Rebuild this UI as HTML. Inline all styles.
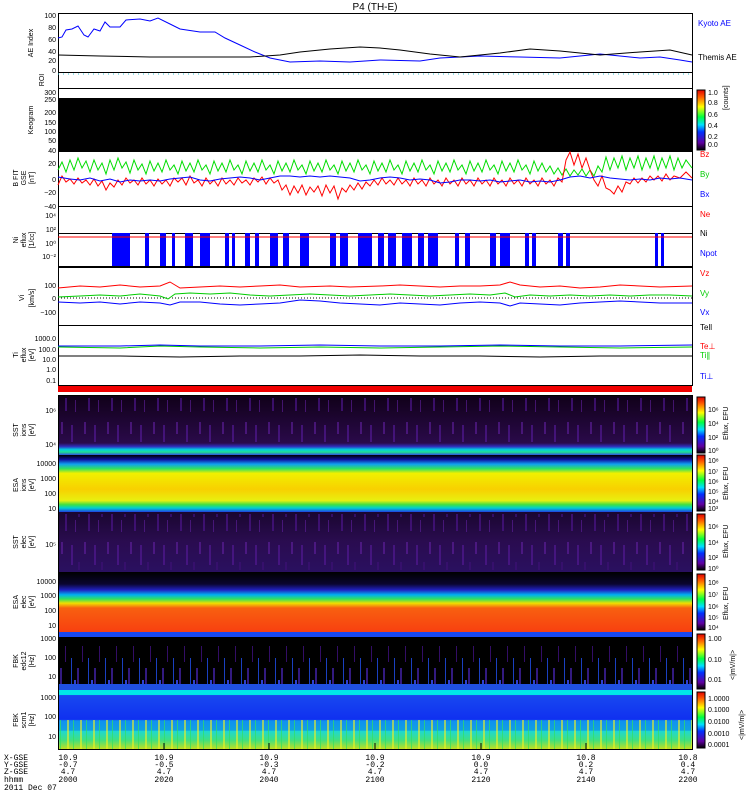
<!DOCTYPE html>
<html><head><meta charset="utf-8"><style>
html,body{margin:0;padding:0;background:#fff;width:750px;height:800px;overflow:hidden}
svg{display:block;font-family:"Liberation Sans",sans-serif}
</style></head><body>
<svg width="750" height="800" xmlns="http://www.w3.org/2000/svg">
<defs>
<linearGradient id="sst1" x1="0" y1="0" x2="0" y2="1">
<stop offset="0" stop-color="#100018"/><stop offset="0.8" stop-color="#2a0a4a"/><stop offset="0.86" stop-color="#3030c0"/><stop offset="0.91" stop-color="#00d0e0"/><stop offset="0.95" stop-color="#20e090"/><stop offset="1" stop-color="#3050e0"/></linearGradient>
<linearGradient id="esa1" x1="0" y1="0" x2="0" y2="1">
<stop offset="0" stop-color="#000"/><stop offset="0.08" stop-color="#1010a0"/><stop offset="0.16" stop-color="#10a0f0"/><stop offset="0.24" stop-color="#30e060"/><stop offset="0.32" stop-color="#f0f000"/><stop offset="0.6" stop-color="#f8d000"/><stop offset="0.8" stop-color="#e8f010"/><stop offset="0.87" stop-color="#40e040"/><stop offset="0.93" stop-color="#00d0d0"/><stop offset="1" stop-color="#2040e0"/></linearGradient>
<linearGradient id="sst2" x1="0" y1="0" x2="0" y2="1">
<stop offset="0" stop-color="#1a0630"/><stop offset="0.5" stop-color="#2a0c50"/><stop offset="1" stop-color="#2a1060"/></linearGradient>
<linearGradient id="esa2" x1="0" y1="0" x2="0" y2="1">
<stop offset="0" stop-color="#000"/><stop offset="0.2" stop-color="#0a0530"/><stop offset="0.3" stop-color="#2020c0"/><stop offset="0.38" stop-color="#00b0f0"/><stop offset="0.45" stop-color="#30e060"/><stop offset="0.52" stop-color="#f0e000"/><stop offset="0.6" stop-color="#f86010"/><stop offset="1" stop-color="#f84010"/></linearGradient>
<linearGradient id="fbk2" x1="0" y1="0" x2="0" y2="1">
<stop offset="0" stop-color="#00e8e8"/><stop offset="0.08" stop-color="#00e8e8"/><stop offset="0.09" stop-color="#1848f0"/><stop offset="0.5" stop-color="#1030f0"/><stop offset="0.52" stop-color="#1090f0"/><stop offset="0.68" stop-color="#10a0e0"/><stop offset="0.7" stop-color="#20d8d0"/><stop offset="0.85" stop-color="#40e080"/><stop offset="1" stop-color="#c0e020"/></linearGradient>
<linearGradient id="cb" x1="0" y1="1" x2="0" y2="0">
<stop offset="0" stop-color="#000"/><stop offset="0.12" stop-color="#6000a0"/><stop offset="0.3" stop-color="#0030ff"/><stop offset="0.42" stop-color="#00e0ff"/><stop offset="0.55" stop-color="#00ff40"/><stop offset="0.72" stop-color="#ffff00"/><stop offset="0.88" stop-color="#ff6000"/><stop offset="1" stop-color="#e00000"/></linearGradient>
<pattern id="pstripe" width="23" height="60" patternUnits="userSpaceOnUse">
<rect x="2" y="5" width="2" height="20" fill="#501890" opacity=".7"/><rect x="9" y="22" width="2" height="15" fill="#3a1070" opacity=".8"/><rect x="15" y="2" width="2" height="12" fill="#6020a0" opacity=".6"/><rect x="19" y="33" width="2" height="18" fill="#4a1488" opacity=".7"/><rect x="6" y="40" width="1" height="12" fill="#6020a0" opacity=".6"/>
</pattern>
<pattern id="fstripe" width="17" height="58" patternUnits="userSpaceOnUse">
<rect x="3" y="20" width="1" height="30" fill="#2050f0" opacity=".8"/><rect x="9" y="30" width="2" height="20" fill="#4020a0" opacity=".8"/><rect x="14" y="8" width="1" height="16" fill="#401080" opacity=".8"/><rect x="6" y="42" width="2" height="10" fill="#3040d0"/>
</pattern>
<pattern id="gstripe" width="13" height="30" patternUnits="userSpaceOnUse">
<rect x="2" y="0" width="2" height="30" fill="#f0f020" opacity=".6"/><rect x="8" y="0" width="1" height="30" fill="#30e060" opacity=".7"/>
</pattern>
</defs>
<text x="375" y="10" font-size="10" text-anchor="middle">P4 (TH-E)</text>
<rect x="58" y="98" width="634" height="53" fill="#000"/>
<rect x="58" y="386" width="634" height="6" fill="#f00000"/>
<rect x="58" y="395" width="634" height="60" fill="url(#sst1)"/>
<rect x="58" y="398" width="634" height="44" fill="url(#pstripe)"/>
<rect x="58" y="455" width="634" height="57" fill="url(#esa1)"/>
<rect x="58" y="512" width="634" height="60" fill="url(#sst2)"/>
<rect x="58" y="514" width="634" height="56" fill="url(#pstripe)"/>
<rect x="58" y="572" width="634" height="60" fill="url(#esa2)"/>
<rect x="58" y="632" width="634" height="58" fill="#000"/>
<rect x="58" y="634" width="634" height="52" fill="url(#fstripe)"/>
<rect x="58" y="632" width="634" height="5" fill="#1848f0"/>
<rect x="58" y="684" width="634" height="6" fill="#2050e0"/>
<rect x="58" y="690" width="634" height="59" fill="url(#fbk2)"/>
<rect x="58" y="720" width="634" height="29" fill="url(#gstripe)"/>
<g fill="none" stroke="#000" stroke-width="1">
<rect x="58.5" y="13.5" width="634" height="59"/>
<rect x="58.5" y="72.5" width="634" height="16"/>
<rect x="58.5" y="88.5" width="634" height="63"/>
<rect x="58.5" y="151.5" width="634" height="55"/>
<rect x="58.5" y="206.5" width="634" height="61"/>
<rect x="58.5" y="233.5" width="634" height="33"/>
<rect x="58.5" y="267.5" width="634" height="58"/>
<rect x="58.5" y="325.5" width="634" height="60"/>
<rect x="58.5" y="395.5" width="634" height="354"/>
</g>
<line x1="58" y1="74" x2="692" y2="74" stroke="#30c0d0" stroke-dasharray="1,4"/>
<line x1="58" y1="298" x2="692" y2="298" stroke="#000" stroke-dasharray="1,2"/>
<g fill="#00f">
<rect x="112" y="233" width="18" height="33"/><rect x="145" y="233" width="4" height="33"/><rect x="160" y="233" width="6" height="33"/><rect x="172" y="233" width="3" height="33"/><rect x="185" y="233" width="8" height="33"/><rect x="200" y="233" width="10" height="33"/><rect x="225" y="233" width="4" height="33"/><rect x="232" y="233" width="3" height="33"/><rect x="245" y="233" width="5" height="33"/><rect x="255" y="233" width="4" height="33"/><rect x="270" y="233" width="8" height="33"/><rect x="283" y="233" width="6" height="33"/><rect x="300" y="233" width="9" height="33"/><rect x="330" y="233" width="6" height="33"/><rect x="340" y="233" width="8" height="33"/><rect x="358" y="233" width="14" height="33"/><rect x="378" y="233" width="6" height="33"/><rect x="388" y="233" width="8" height="33"/><rect x="402" y="233" width="10" height="33"/><rect x="418" y="233" width="6" height="33"/><rect x="428" y="233" width="10" height="33"/><rect x="455" y="233" width="4" height="33"/><rect x="465" y="233" width="5" height="33"/><rect x="490" y="233" width="6" height="33"/><rect x="500" y="233" width="10" height="33"/><rect x="525" y="233" width="4" height="33"/><rect x="532" y="233" width="4" height="33"/><rect x="558" y="233" width="5" height="33"/><rect x="566" y="233" width="4" height="33"/><rect x="655" y="233" width="3" height="33"/><rect x="661" y="233" width="3" height="33"/>
</g>
<line x1="58" y1="237" x2="692" y2="237" stroke="#f00"/>
<g fill="none" stroke-width="1">
<polyline stroke="#00f" points="58,38 62,37 66,30 72,29 78,26 84,35 88,37 94,29 100,31 105,22 110,27 120,27 126,20 140,19 150,21 158,18 170,24 180,29 200,32 215,32 225,38 240,45 255,52 270,58 290,62 320,61 350,62 380,60 420,61 440,58 480,56 520,57 560,58 580,56 600,54 620,56 640,58 660,57 680,60 692,62"/>
<polyline stroke="#000" points="58,55 100,56 150,57 200,57 250,57 280,55 300,52 330,49 360,47 380,48 400,50 430,54 460,57 500,53 530,49 560,51 600,55 640,52 670,50 692,55"/>
<polyline stroke="#0d0" points="58,170 62,162 66,172 70,160 74,170 78,158 82,168 86,161 90,172 94,160 98,170 102,163 106,174 110,160 114,170 118,158 122,168 126,162 130,173 134,160 138,170 142,164 146,174 150,161 154,171 158,163 162,172 166,160 170,170 174,165 178,174 182,161 186,171 190,163 194,172 198,160 202,170 206,165 210,174 214,161 218,171 222,163 226,172 230,160 234,170 238,165 242,174 246,161 250,171 254,163 258,172 262,160 266,170 270,165 274,174 278,161 282,171 286,163 290,172 294,160 298,170 302,165 306,174 310,161 314,171 318,163 322,172 326,160 330,170 334,165 338,174 342,161 346,171 350,163 354,172 358,160 362,170 366,165 370,174 374,161 378,171 382,163 386,172 390,160 394,170 398,165 402,174 406,161 410,171 414,163 418,172 422,160 426,170 430,165 434,174 438,161 442,171 446,163 450,172 454,160 458,170 462,165 466,174 470,161 474,171 478,163 482,172 486,160 490,170 494,165 498,174 502,161 506,171 510,163 514,172 518,160 522,170 526,165 530,174 534,161 538,171 542,163 546,172 550,166 554,174 558,168 562,175 566,169 570,176 574,170 578,175 582,169 586,176 590,170 594,176 598,166 602,172 606,157 610,170 614,158 618,168 622,156 626,170 630,158 634,168 638,156 642,170 646,158 650,168 654,156 658,170 662,158 666,168 670,156 674,170 678,158 682,168 686,160 692,168"/>
<polyline stroke="#f00" points="58,185 62,176 66,182 70,179 74,184 78,178 82,183 86,180 90,185 94,179 98,186 102,181 106,190 110,183 114,187 118,180 122,185 126,178 130,183 134,180 138,185 142,178 146,184 150,180 154,186 158,179 162,184 166,180 170,186 174,178 178,182 182,178 186,185 190,176 194,183 198,180 202,186 206,178 210,184 214,180 218,186 222,178 226,184 230,180 234,185 238,178 242,183 246,180 250,185 254,178 258,182 262,177 266,184 270,178 274,183 278,180 282,190 286,185 290,195 294,186 298,193 302,185 306,195 310,187 314,192 318,186 322,196 326,185 330,193 334,186 338,199 342,188 346,192 350,185 354,190 358,183 362,189 366,182 370,186 374,180 378,185 382,178 386,184 390,180 394,185 398,178 402,184 406,180 410,186 414,178 418,184 422,180 426,186 430,178 434,184 438,180 442,186 446,178 450,184 454,180 458,186 462,178 466,184 470,180 474,186 478,178 482,184 486,180 490,186 494,178 498,184 502,180 506,186 510,178 514,184 518,180 522,186 526,178 530,184 534,180 538,186 542,178 546,184 550,180 554,186 558,178 562,182 566,160 570,152 574,165 578,154 582,168 586,158 590,170 594,180 598,186 602,176 606,188 610,190 614,194 618,186 622,192 626,182 630,184 634,178 638,183 642,178 646,182 650,176 654,180 658,176 662,181 666,174 670,180 674,176 680,178 686,172 692,178"/>
<polyline stroke="#00f" points="58,177 70,179 80,180 90,178 100,181 110,179 120,182 130,180 140,181 150,180 160,181 170,179 180,178 190,177 200,180 210,181 220,179 230,178 240,177 250,178 260,180 270,178 280,176 290,176 300,177 310,176 320,177 330,176 340,177 350,178 360,181 370,180 380,178 390,177 400,178 410,180 420,179 430,180 440,183 450,182 460,180 470,180 480,181 490,180 500,182 510,181 520,180 530,182 540,181 550,182 560,180 570,177 580,176 590,178 600,176 610,178 620,179 630,180 640,179 650,180 660,178 670,179 680,178 692,180"/>
<polyline stroke="#f00" points="58,288 80,286 100,287 120,285 140,287 160,286 170,282 175,285 180,288 200,287 220,286 240,287 260,286 280,285 300,287 330,286 350,287 380,286 400,285 420,286 440,287 460,286 480,286 500,285 510,282 520,285 540,287 560,286 580,288 600,287 620,285 640,286 660,287 692,286"/>
<polyline stroke="#0c0" points="58,297 80,296 100,295 120,296 140,294 160,296 168,299 175,294 190,293 210,294 230,293 250,295 270,296 290,295 310,294 330,295 350,296 370,295 390,294 410,295 430,296 450,295 470,294 490,295 505,293 515,297 530,295 550,296 570,295 590,296 610,295 630,296 650,295 670,295 692,296"/>
<polyline stroke="#00f" points="58,302 80,303 100,302 120,304 140,302 160,303 170,305 180,302 200,302 220,304 240,305 260,304 280,303 300,300 320,301 340,303 360,304 380,305 400,303 420,304 440,305 460,303 480,302 500,303 510,306 520,303 540,304 560,305 580,303 600,302 620,301 640,302 660,303 692,303"/>
<polyline stroke="#0c0" points="58,347 120,348 160,346 200,347 260,348 320,347 380,348 440,347 500,346 560,347 620,348 692,347"/>
<polyline stroke="#00f" points="58,346 120,346 160,345 200,346 260,346 320,345 380,346 440,346 500,345 560,346 620,346 692,345"/>
<polyline stroke="#000" points="58,356 120,356 180,357 240,356 300,356 360,355 420,356 480,356 540,357 600,356 692,356"/>
</g>
<rect x="697" y="90" width="8" height="60" fill="url(#cb)" stroke="#000"/>
<rect x="697" y="397" width="8" height="56" fill="url(#cb)" stroke="#000"/>
<rect x="697" y="455" width="8" height="56" fill="url(#cb)" stroke="#000"/>
<rect x="697" y="514" width="8" height="56" fill="url(#cb)" stroke="#000"/>
<rect x="697" y="574" width="8" height="56" fill="url(#cb)" stroke="#000"/>
<rect x="697" y="634" width="8" height="55" fill="url(#cb)" stroke="#000"/>
<rect x="697" y="692" width="8" height="56" fill="url(#cb)" stroke="#000"/>
<g font-size="7" text-anchor="end" fill="#000">
<text x="56" y="18">100</text><text x="56" y="30">80</text><text x="56" y="42">60</text><text x="56" y="54">40</text><text x="56" y="63">20</text><text x="56" y="73">0</text>
<text x="56" y="95">300</text><text x="56" y="102">250</text><text x="56" y="115">200</text><text x="56" y="125">150</text><text x="56" y="134">100</text><text x="56" y="143">50</text><text x="56" y="153">40</text>
<text x="56" y="166">20</text><text x="56" y="182">0</text><text x="56" y="195">−20</text><text x="56" y="209">−40</text>
<text x="56" y="218">10⁴</text><text x="56" y="232">10²</text><text x="56" y="246">10⁰</text><text x="56" y="259">10⁻²</text>
<text x="56" y="288">100</text><text x="56" y="301">0</text><text x="56" y="315">−100</text>
<text x="56" y="341">1000.0</text><text x="56" y="352">100.0</text><text x="56" y="362">10.0</text><text x="56" y="372">1.0</text><text x="56" y="383">0.1</text>
<text x="56" y="413">10⁶</text><text x="56" y="447">10⁴</text>
<text x="56" y="466">10000</text><text x="56" y="481">1000</text><text x="56" y="496">100</text><text x="56" y="511">10</text>
<text x="56" y="547">10⁵</text>
<text x="56" y="584">10000</text><text x="56" y="598">1000</text><text x="56" y="613">100</text><text x="56" y="628">10</text>
<text x="56" y="641">1000</text><text x="56" y="660">100</text><text x="56" y="679">10</text>
<text x="56" y="700">1000</text><text x="56" y="719">100</text><text x="56" y="739">10</text>
</g>
<g font-size="7" fill="#000" text-anchor="middle">
<text transform="translate(33,43) rotate(-90)">AE Index</text>
<text transform="translate(44,80) rotate(-90)">ROI</text>
<text transform="translate(33,120) rotate(-90)">Keogram</text>
<text transform="translate(18,178) rotate(-90)">B FIT</text><text transform="translate(26,178) rotate(-90)">GSE</text><text transform="translate(34,178) rotate(-90)">[nT]</text>
<text transform="translate(18,240) rotate(-90)">Ni</text><text transform="translate(26,240) rotate(-90)">eflux</text><text transform="translate(34,240) rotate(-90)">[1/cc]</text>
<text transform="translate(24,298) rotate(-90)">Vi</text><text transform="translate(34,298) rotate(-90)">[km/s]</text>
<text transform="translate(18,355) rotate(-90)">Ti</text><text transform="translate(26,355) rotate(-90)">eflux</text><text transform="translate(34,355) rotate(-90)">[eV]</text>
<text transform="translate(18,430) rotate(-90)">SST</text><text transform="translate(26,430) rotate(-90)">ions</text><text transform="translate(34,430) rotate(-90)">[eV]</text>
<text transform="translate(18,485) rotate(-90)">ESA</text><text transform="translate(26,485) rotate(-90)">ions</text><text transform="translate(34,485) rotate(-90)">[eV]</text>
<text transform="translate(18,542) rotate(-90)">SST</text><text transform="translate(26,542) rotate(-90)">elec</text><text transform="translate(34,542) rotate(-90)">[eV]</text>
<text transform="translate(18,602) rotate(-90)">ESA</text><text transform="translate(26,602) rotate(-90)">elec</text><text transform="translate(34,602) rotate(-90)">[eV]</text>
<text transform="translate(18,661) rotate(-90)">FBK</text><text transform="translate(26,661) rotate(-90)">edc12</text><text transform="translate(34,661) rotate(-90)">[Hz]</text>
<text transform="translate(18,720) rotate(-90)">FBK</text><text transform="translate(26,720) rotate(-90)">scm1</text><text transform="translate(34,720) rotate(-90)">[Hz]</text>
</g>
<g font-size="8">
<text x="698" y="26" fill="#00f">Kyoto AE</text><text x="698" y="60" fill="#000">Themis AE</text>
<text x="700" y="157" fill="#f00">Bz</text><text x="700" y="177" fill="#0c0">By</text><text x="700" y="197" fill="#00f">Bx</text>
<text x="700" y="217" fill="#f00">Ne</text><text x="700" y="236" fill="#000">Ni</text><text x="700" y="256" fill="#00f">Npot</text>
<text x="700" y="276" fill="#f00">Vz</text><text x="700" y="296" fill="#0c0">Vy</text><text x="700" y="315" fill="#00f">Vx</text>
<text x="700" y="330" fill="#000">Tell</text><text x="700" y="349" fill="#f00">Te⊥</text><text x="700" y="358" fill="#0c0">Ti∥</text><text x="700" y="379" fill="#00f">Ti⊥</text>
</g>
<g font-size="7" fill="#000">
<text x="708" y="95">1.0</text><text x="708" y="105">0.8</text><text x="708" y="117">0.6</text><text x="708" y="128">0.4</text><text x="708" y="139">0.2</text><text x="708" y="147">0.0</text>
<text transform="translate(728,110) rotate(-90)">[counts]</text>
<text x="708" y="412">10⁶</text><text x="708" y="426">10⁴</text><text x="708" y="440">10²</text><text x="708" y="453">10⁰</text>
<text transform="translate(728,440) rotate(-90)">Eflux, EFU</text>
<text x="708" y="463">10⁸</text><text x="708" y="474">10⁷</text><text x="708" y="484">10⁶</text><text x="708" y="494">10⁵</text><text x="708" y="504">10⁴</text><text x="708" y="511">10³</text>
<text transform="translate(728,500) rotate(-90)">Eflux, EFU</text>
<text x="708" y="529">10⁶</text><text x="708" y="545">10⁴</text><text x="708" y="560">10²</text><text x="708" y="571">10⁰</text>
<text transform="translate(728,558) rotate(-90)">Eflux, EFU</text>
<text x="708" y="585">10⁸</text><text x="708" y="597">10⁷</text><text x="708" y="609">10⁶</text><text x="708" y="620">10⁵</text><text x="708" y="630">10⁴</text>
<text transform="translate(728,620) rotate(-90)">Eflux, EFU</text>
<text x="708" y="641">1.00</text><text x="708" y="662">0.10</text><text x="708" y="682">0.01</text>
<text transform="translate(735,680) rotate(-90)">&lt;|mV/m|&gt;</text>
<text x="708" y="701">1.0000</text><text x="708" y="712">0.1000</text><text x="708" y="724">0.0100</text><text x="708" y="736">0.0010</text><text x="708" y="747">0.0001</text>
<text transform="translate(744,740) rotate(-90)">&lt;|mV/m|&gt;</text>
</g>
<g stroke="#000">
<line x1="164" y1="743" x2="164" y2="749"/><line x1="269" y1="743" x2="269" y2="749"/><line x1="375" y1="743" x2="375" y2="749"/><line x1="481" y1="743" x2="481" y2="749"/><line x1="586" y1="743" x2="586" y2="749"/>
</g>
<g font-size="8" fill="#000" font-family="Liberation Mono,monospace">
<text x="4" y="760">X-GSE</text><text x="4" y="767">Y-GSE</text><text x="4" y="774">Z-GSE</text><text x="4" y="782">hhmm</text><text x="4" y="790">2011 Dec 07</text>
</g>
<g font-size="8" fill="#000" text-anchor="middle" font-family="Liberation Mono,monospace">
<text x="68" y="760">10.9</text><text x="68" y="767">-0.7</text><text x="68" y="774">4.7</text><text x="68" y="782">2000</text>
<text x="164" y="760">10.9</text><text x="164" y="767">-0.5</text><text x="164" y="774">4.7</text><text x="164" y="782">2020</text>
<text x="269" y="760">10.9</text><text x="269" y="767">-0.3</text><text x="269" y="774">4.7</text><text x="269" y="782">2040</text>
<text x="375" y="760">10.9</text><text x="375" y="767">-0.2</text><text x="375" y="774">4.7</text><text x="375" y="782">2100</text>
<text x="481" y="760">10.9</text><text x="481" y="767">0.0</text><text x="481" y="774">4.7</text><text x="481" y="782">2120</text>
<text x="586" y="760">10.8</text><text x="586" y="767">0.2</text><text x="586" y="774">4.7</text><text x="586" y="782">2140</text>
<text x="688" y="760">10.8</text><text x="688" y="767">0.4</text><text x="688" y="774">4.7</text><text x="688" y="782">2200</text>
</g>
</svg>
</body></html>
